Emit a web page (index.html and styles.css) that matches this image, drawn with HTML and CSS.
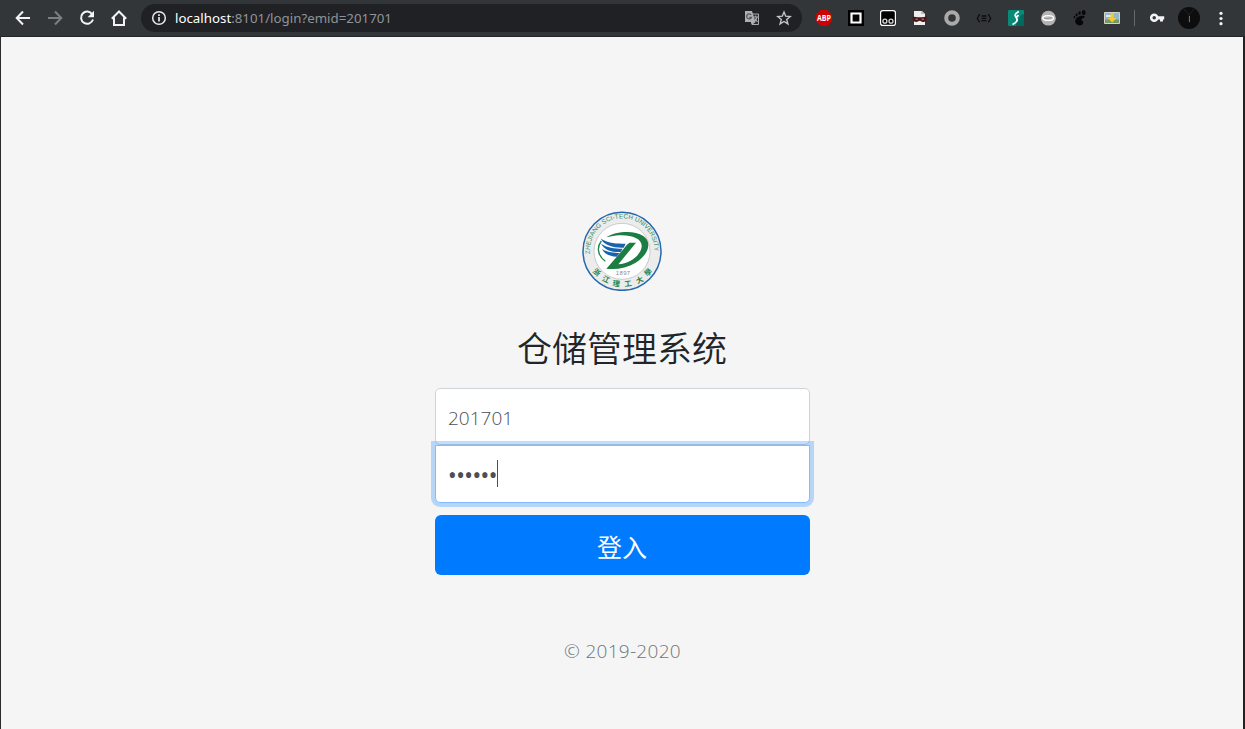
FILE: index.html
```html
<!DOCTYPE html>
<html lang="zh-CN">
<head>
<meta charset="utf-8">
<title>仓储管理系统</title>
<link rel="stylesheet" href="styles.css">
</head>
<body>
<header class="toolbar">
  <span class="cell"><svg width="16" height="16" viewBox="0 0 16 16" fill="none" stroke="#f1f3f4" stroke-width="2"><path d="M15 8H2M8 1.500 1.700 8 8 14.500"/></svg></span>
  <span class="cell"><svg width="16" height="16" viewBox="0 0 16 16" fill="none" stroke="#7c7f82" stroke-width="2"><path d="M1 8h13M8 1.500 14.300 8 8 14.500"/></svg></span>
  <span class="cell"><svg width="16" height="16" viewBox="0 0 16 16" fill="none" stroke="#f1f3f4" stroke-width="2"><path d="M13.200 4.200A6.100 6.100 0 1 0 14 9.500"/><path d="M15 .8v6.400H8.600z" fill="#f1f3f4" stroke="none"/></svg></span>
  <span class="cell"><svg width="16" height="16" viewBox="0 0 16 16" fill="none" stroke="#f1f3f4" stroke-width="2"><path d="M.8 8.700 8 1.500l7.200 7.200M3 7.500V15h10V7.500"/></svg></span>
  <div class="omnibox">
    <svg class="info" width="16" height="16" viewBox="0 0 16 16" fill="none" stroke="#e8eaed"><circle cx="8" cy="8" r="6.300" stroke-width="1.500"/><path d="M8 7v4.500M8 4.200v1.700" stroke-width="1.700"/></svg>
    <span class="url"><span class="host">localhost</span><span class="path">:8101/login?emid=201701</span></span>
    <svg class="translate" width="16" height="16" viewBox="0 0 16 16"><path d="M6 4h8.500v10.500H8z" fill="#292b2e" stroke="#a7a9ac"/><path d="M1 1h7l3.500 11H1z" fill="#adafb2"/><path d="M7.200 5A2.500 2.500 0 1 0 7.500 7.300H5.200" fill="none" stroke="#55585b" stroke-width="1.300"/><path d="M9.500 7H14M11.700 5.500V7M13 7c-.5 2-1.500 3.500-2.500 4.500M10.800 8.500l2.700 3.500" fill="none" stroke="#a7a9ac" stroke-width="1.100"/><path d="m8 15 3.500-3H7z" fill="#adafb2"/></svg>
    <svg class="star" width="16" height="16" viewBox="0 0 16 16" fill="none" stroke="#c3c5c8" stroke-width="1.400"><path d="m8 2 1.700 4.200 4.500.3-3.500 2.900 1.200 4.500L8 11.500l-3.900 2.400 1.200-4.500-3.500-2.900 4.500-.3z"/></svg>
  </div>
  <span class="cell"><svg width="16" height="16" viewBox="0 0 16 16"><path d="M4.700 0h6.600L16 4.700v6.600L11.300 16H4.700L0 11.300V4.700z" fill="#cf0000"/><text class="abp" x="8" y="11" textLength="14" lengthAdjust="spacingAndGlyphs">ABP</text></svg></span>
  <span class="cell"><svg width="16" height="16" viewBox="0 0 16 16"><path fill="#000" d="M0 0h16v16H0z"/><path d="M3.500 3.500h9v9h-9z" fill="#050505" stroke="#fff" stroke-width="2.200"/></svg></span>
  <span class="cell"><svg width="16" height="16" viewBox="0 0 16 16"><rect x=".6" y=".6" width="14.800" height="14.800" rx="2.200" fill="#000" stroke="#fff" stroke-width="1.200"/><g fill="none" stroke="#ddd" stroke-width="1.300"><circle cx="4.900" cy="11.200" r="2"/><circle cx="11" cy="11.200" r="2"/></g></svg></span>
  <span class="cell"><svg width="16" height="16" viewBox="0 0 16 16"><path d="M2 1h8l3 3v11H2z" fill="#eee"/><path d="M9 1v3h4z" fill="#bbb"/><path d="M.5 6.500C4 7.500 12 7.500 15 6.500c0 3-.8 5.500-4 5.500-2 0-2-1.200-3.200-1.200S6 12 4.200 12C1 12 .5 9 .5 6.500z" fill="#4b1519"/><path d="M3.500 9.200h2.300M9.700 9.200H12" stroke="#a59090" stroke-width="1"/></svg></span>
  <span class="cell"><svg width="16" height="16" viewBox="0 0 16 16"><circle cx="8" cy="8" r="5.800" fill="none" stroke="#aaa" stroke-width="4"/></svg></span>
  <span class="cell"><svg width="16" height="16" viewBox="0 0 16 16" fill="none" stroke="#0c0d0e" stroke-width="1.300"><path d="M4 4.500c-2 0-1 2.500-2.700 3.700C3 9.500 2 12 4 12M12 4.500c2 0 1 2.500 2.700 3.700C13 9.500 14 12 12 12M5.500 6h5M5.500 8.300h5M5.500 10.600h5"/></svg></span>
  <span class="cell"><svg width="16" height="16" viewBox="0 0 16 16"><rect width="16" height="16" rx="1" fill="#078b78"/><path d="M8 14 14 4l2 1v11H8z" fill="#00695e"/><path d="M10.800 1.500C6.500 4 6.500 5 8.200 7.500S9.500 12 4.500 14.500M10.300 5 9 7" fill="none" stroke="#fff" stroke-width="1.800"/></svg></span>
  <span class="cell"><svg width="16" height="16" viewBox="0 0 16 16"><circle cx="8.400" cy="8.200" r="7.400" fill="#b3b3b3"/><ellipse cx="8.200" cy="8" rx="5.400" ry="2.400" fill="#bbb" stroke="#fff" stroke-width="1.400"/><path d="M4 8.500q4 1 8-1" fill="none" stroke="#888" stroke-width=".7"/></svg></span>
  <span class="cell"><svg width="16" height="16" viewBox="0 0 16 16" fill="#070707"><path d="M12.500 6.200C8 4.500 2.500 8 3.300 12c.8 4.500 7.600 4.500 8 .6.200-1.900-2-1.900-2-3.100s4-1 3.200-3.300z"/><ellipse cx="11.700" cy="2.500" rx="1.900" ry="2.500"/><ellipse cx="7.600" cy="3" rx="1.200" ry="1.700"/><ellipse cx="4.700" cy="4.800" rx="1" ry="1.500"/><ellipse cx="2.500" cy="7" rx=".8" ry="1.300"/></svg></span>
  <span class="cell"><svg width="16" height="16" viewBox="0 0 16 16"><path d="M.5 2.500h15v11H.5z" fill="#8eb9d3" stroke="#d5d3c8"/><path d="M1 9.500h14V13H1z" fill="#78956b"/><path d="M2 5h5v2H2z" fill="#dceaf0"/><path d="M6.700 3h3v5h3L8.200 12.500 3.700 8h3z" fill="#f5cb2b"/></svg></span>
  <span class="divider"></span>
  <span class="cell"><svg width="16" height="16" viewBox="0 0 16 16"><path d="M8.600 6.200h6.600v3.200h-1.200v2.200h-3V9.400H8.600z" fill="#f1f3f4"/><circle cx="5.200" cy="7.800" r="3" fill="none" stroke="#f1f3f4" stroke-width="2.500"/></svg></span>
  <span class="cell"><svg width="22" height="22" viewBox="0 0 22 22"><circle cx="11" cy="11" r="11" fill="#0d0d0e"/><path d="m6 2 5 6 5-6M11 8v8" fill="none" stroke="#232325"/><path d="M11.500 9v6" stroke="#7d6a58"/></svg></span>
  <span class="cell"><svg width="4" height="16" viewBox="0 0 4 16" fill="#f1f3f4"><circle cx="2" cy="3.300" r="1.600"/><circle cx="2" cy="8.500" r="1.600"/><circle cx="2" cy="13.700" r="1.600"/></svg></span>
</header>
<main class="page">
  <form class="login">
    <svg class="logo" width="80" height="80" viewBox="30 27 240 240">
      <defs><path id="ring" d="M56 168A97 97 0 1 1 245 168"/></defs>
      <circle cx="150" cy="148" r="117" fill="#ececed" stroke="#2467ae" stroke-width="4.500"/>
      <circle cx="150" cy="148" r="84" fill="#fff" stroke="#b4b5b7" stroke-width="2"/>
      <text class="ring-text"><textPath href="#ring" startOffset="12" textLength="316">ZHEJIANG SCI-TECH UNIVERSITY</textPath></text>
      <path d="M100 178C76 160 74 135 88 117" fill="none" stroke="#1d8548" stroke-width="4"/>
      <path fill-rule="evenodd" d="M103 106C132 87 187 84 214 102C242 121 229 159 191 182C165 198 132 204 103 200L146 151C156 140 162 128 173 122L192 122L139 187C179 184 211 154 209 130C207 103 158 92 103 106z" fill="#1b7d41"/>
      <path d="M86 109C103 123 130 126 161 125L155 137C126 138 96 132 86 109zM87 125C104 137 128 140 152 140L146 150C119 151 97 144 87 125zM90 141C106 151 126 153 143 153L134 164C111 163 97 155 90 141z" fill="#1763ad"/>
      <text class="year" x="153" y="220" textLength="43">1897</text>
      <g class="script">
        <text transform="translate(74 211) rotate(42)" y="8">浙</text>
        <text transform="translate(102 232) rotate(25)" y="8">江</text>
        <text transform="translate(133 245) rotate(8)" y="8">理</text>
        <text transform="translate(168 245) rotate(-8)" y="8">工</text>
        <text transform="translate(203 234) rotate(-26)" y="8">大</text>
        <text transform="translate(228 211) rotate(-43)" y="8">學</text>
      </g>
    </svg>
    <h1 class="title">仓储管理系统</h1>
    <div class="field user">201701</div>
    <div class="field password"><span class="dots">••••••</span><span class="caret"></span></div>
    <button class="submit" type="button">登入</button>
    <p class="copyright">© 2019-2020</p>
  </form>
</main>
</body>
</html>
```
FILE: styles.css
```css
* { box-sizing: border-box; }
body {
  margin: 0;
  height: 729px;
  overflow: hidden;
  display: flex;
  flex-direction: column;
  background: #f5f5f5;
  font-family: "Noto Sans", "Noto Sans CJK SC", sans-serif;
}
svg { display: block; flex: none; }
.toolbar {
  height: 37px;
  flex: none;
  display: flex;
  align-items: flex-start;
  padding: 2px 0 0 7px;
  background: #323639;
  border-bottom: 1px solid #24272a;
}
.cell {
  width: 32px;
  height: 32px;
  flex: none;
  display: flex;
  align-items: center;
  justify-content: center;
}
.omnibox {
  width: 661px;
  height: 28px;
  flex: none;
  margin: 2px 6px 0;
  padding: 0 10px;
  display: flex;
  align-items: center;
  border-radius: 14px;
  background: #202124;
}
.url {
  flex: 1;
  margin-left: 8px;
  font-size: 13.3px;
  line-height: 28px;
  white-space: nowrap;
}
.host { color: #fff; }
.path { color: #8f9499; }
.translate { margin-right: 16px; }
.abp {
  font: 700 8px "Open Sans", sans-serif;
  fill: #fff;
  text-anchor: middle;
}
.divider {
  width: 1px;
  height: 16px;
  flex: none;
  margin: 8px 6px 0;
  background: #66696c;
}
.page {
  flex: 1;
  display: flex;
  justify-content: center;
  align-items: flex-start;
  border-left: 1px solid #292c2f;
  border-right: 2px solid #202224;
}
.login {
  width: 375px;
  margin-left: 1px;
  padding-top: 174px;
  display: flex;
  flex-direction: column;
}
.logo { margin-left: 147px; }
.ring-text {
  font: 19px "Liberation Sans", sans-serif;
  fill: #2e8b59;
}
.year {
  font: 18px "Liberation Sans", sans-serif;
  fill: #898b8e;
  text-anchor: middle;
}
.script {
  font: 700 22px "Noto Sans CJK SC", sans-serif;
  fill: #24864d;
  text-anchor: middle;
}
.title {
  margin: 32px 1px 17px 0;
  height: 48px;
  font: 350 35px/48px "Noto Sans CJK SC", "Noto Sans CJK SC DemiLight", sans-serif;
  color: #212529;
  text-align: center;
}
.field {
  display: flex;
  align-items: center;
  padding: 2px 12px 0;
  background: #fff;
  border: 1px solid #ced4da;
  font-family: "Open Sans", "Noto Sans", sans-serif;
  font-size: 19px;
  font-weight: 360;
  color: #495057;
}
.user {
  height: 57px;
  border-radius: 5px;
}
.password {
  height: 58px;
  padding-top: 0;
  border-color: #80bdff;
  border-radius: 0 0 5px 5px;
  box-shadow: 0 0 0 4px rgba(0, 123, 255, .25);
}
.dots {
  padding-top: 3px;
  font-family: "Noto Sans", sans-serif;
  font-size: 23px;
  font-weight: 400;
  line-height: 27px;
  letter-spacing: -.5px;
}
.caret {
  width: 1px;
  height: 27px;
  margin-bottom: 2px;
  background: #495057;
}
.submit {
  height: 60px;
  margin-top: 12px;
  padding: 1px 1px 0 0;
  border: 0;
  border-radius: 6px;
  background: #007bff;
  color: #fff;
  font: 400 25px "Noto Sans CJK SC", sans-serif;
}
.copyright {
  margin: 62px 0 0;
  font-family: "Open Sans", "Noto Sans", sans-serif;
  font-size: 19px;
  font-weight: 360;
  line-height: 28px;
  letter-spacing: .3px;
  color: #6c757d;
  text-align: center;
}
```
